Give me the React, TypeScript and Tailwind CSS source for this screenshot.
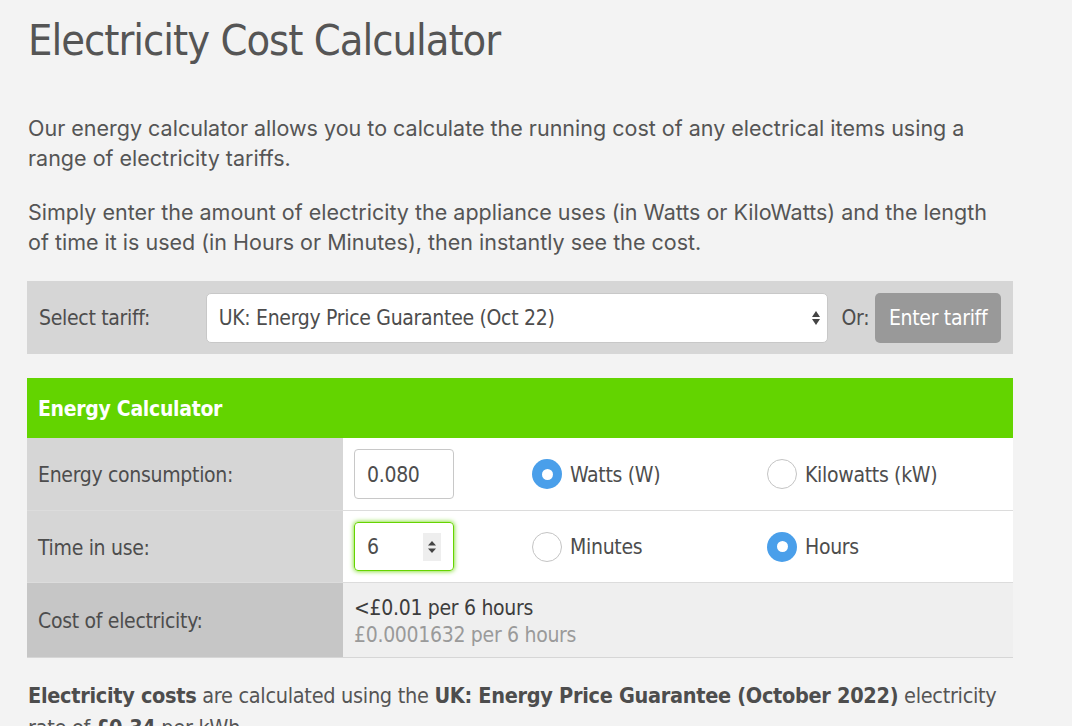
import { useState } from "react";

const cond = "font-['Liberation_Sans_Narrow','DejaVu_Sans_Condensed',sans-serif] tracking-[-0.3px]";

function Radio({ checked, label }: { checked: boolean; label: string }) {
  return (
    <label className="flex items-center gap-2">
      {checked ? (
        <span className="flex h-[30px] w-[30px] items-center justify-center rounded-full bg-[#4a9fea]">
          <span className="h-[11px] w-[11px] rounded-full bg-white" />
        </span>
      ) : (
        <span className="h-[30px] w-[30px] rounded-full border border-[#c4c4c4] bg-white" />
      )}
      <span className={`${cond} pt-[3px] text-[21px] text-[#4d4d4d]`}>{label}</span>
    </label>
  );
}

export default function App() {
  const [tariff] = useState("UK: Energy Price Guarantee (Oct 22)");

  return (
    <div className="min-h-[726px] bg-[#f3f3f3] pl-[28px] pr-[59px] text-[#555] font-['Inter',sans-serif]">
      <h1 className="font-['DejaVu_Sans_Condensed',sans-serif] pt-[12px] text-[43px] leading-[56px] tracking-[-1px] text-[#555]">
        Electricity Cost Calculator
      </h1>

      <p className="mt-[45px] text-[21.5px] leading-[30px]">
        Our energy calculator allows you to calculate the running cost of any electrical items using a range of
        electricity tariffs.
      </p>
      <p className="mt-[24px] text-[21.5px] leading-[30px]">
        Simply enter the amount of electricity the appliance uses (in Watts or KiloWatts) and the length of time it is
        used (in Hours or Minutes), then instantly see the cost.
      </p>

      <div className="-ml-px mt-[24px] flex h-[73px] items-center bg-[#d6d6d6] pl-[12px] pr-[12px]">
        <span className={`${cond} w-[167px] pt-[3px] text-[21px] text-[#4d4d4d]`}>Select tariff:</span>
        <div className="flex h-[50px] w-[623px] items-center justify-between rounded-[5px] border border-[#c8c8c8] bg-white pl-[12px] pr-[6px]">
          <span className={`${cond} pt-[3px] text-[21px] text-[#4d4d4d]`}>{tariff}</span>
          <svg width="10" height="16" viewBox="0 0 10 16">
            <path d="M5 1 L9 7 H1 Z" fill="#444" />
            <path d="M5 15 L9 9 H1 Z" fill="#444" />
          </svg>
        </div>
        <span className={`${cond} ml-[14px] pt-[3px] text-[21px] text-[#4d4d4d]`}>Or:</span>
        <button className={`${cond} ml-[6px] h-[50px] w-[126px] rounded-[5px] bg-[#999] pt-[3px] text-[21px] text-white`}>
          Enter tariff
        </button>
      </div>

      <div className="-ml-px mt-[24px]">
        <div className={`${cond} flex h-[60px] items-center bg-[#63d400] pl-[11px] pt-[3px] text-[21px] font-bold text-white`}>
          Energy Calculator
        </div>

        <div className="flex h-[73px] border-b border-[#dcdcdc]">
          <div className={`${cond} flex w-[316px] items-center bg-[#d6d6d6] pl-[11px] pt-[4px] text-[21px] text-[#4d4d4d]`}>
            Energy consumption:
          </div>
          <div className="flex flex-1 items-center bg-white pl-[11px]">
            <div className={`${cond} flex h-[50px] w-[100px] items-center rounded-[4px] border border-[#c8c8c8] pl-[12px] pt-[3px] text-[21px] text-[#4d4d4d]`}>
              0.080
            </div>
            <div className="ml-[78px] w-[235px]">
              <Radio checked label="Watts (W)" />
            </div>
            <Radio checked={false} label="Kilowatts (kW)" />
          </div>
        </div>

        <div className="flex h-[72px] border-b border-[#dcdcdc]">
          <div className={`${cond} flex w-[316px] items-center bg-[#d6d6d6] pl-[11px] pt-[4px] text-[21px] text-[#4d4d4d]`}>
            Time in use:
          </div>
          <div className="flex flex-1 items-center bg-white pl-[11px]">
            <div className={`${cond} flex h-[49px] w-[100px] items-center justify-between rounded-[4px] border border-[#66d400] pl-[12px] pr-[12px] text-[21px] text-[#4d4d4d] shadow-[0_0_5px_#66d400]`}>
              <span className="pt-[3px]">6</span>
              <span className="flex h-[28px] w-[18px] items-center justify-center bg-[#eee]">
                <svg width="10" height="16" viewBox="0 0 10 16">
                  <path d="M5 2 L9 6.5 H1 Z" fill="#444" />
                  <path d="M5 14 L9 9.5 H1 Z" fill="#444" />
                </svg>
              </span>
            </div>
            <div className="ml-[78px] w-[235px]">
              <Radio checked={false} label="Minutes" />
            </div>
            <Radio checked label="Hours" />
          </div>
        </div>

        <div className="flex h-[75px] border-b border-[#d6d6d6]">
          <div className={`${cond} flex w-[316px] items-center bg-[#c6c6c6] pl-[11px] pt-[4px] text-[21px] text-[#4d4d4d]`}>
            Cost of electricity:
          </div>
          <div className={`${cond} flex flex-1 flex-col justify-center bg-[#efefef] pl-[11px] pt-[4px] text-[21px] leading-[27px]`}>
            <span className="text-[#3d3d3d]">&lt;£0.01 per 6 hours</span>
            <span className="text-[#9a9a9a]">£0.0001632 per 6 hours</span>
          </div>
        </div>
      </div>

      <p className={`${cond} mt-[22px] text-[21.5px] leading-[32px] text-[#555]`}>
        <b className="text-[#4d4d4d]">Electricity costs</b> are calculated using the{" "}
        <b className="text-[#4d4d4d]">UK: Energy Price Guarantee (October 2022)</b> electricity rate of{" "}
        <b className="text-[#4d4d4d]">£0.34</b> per kWh.
      </p>
    </div>
  );
}
